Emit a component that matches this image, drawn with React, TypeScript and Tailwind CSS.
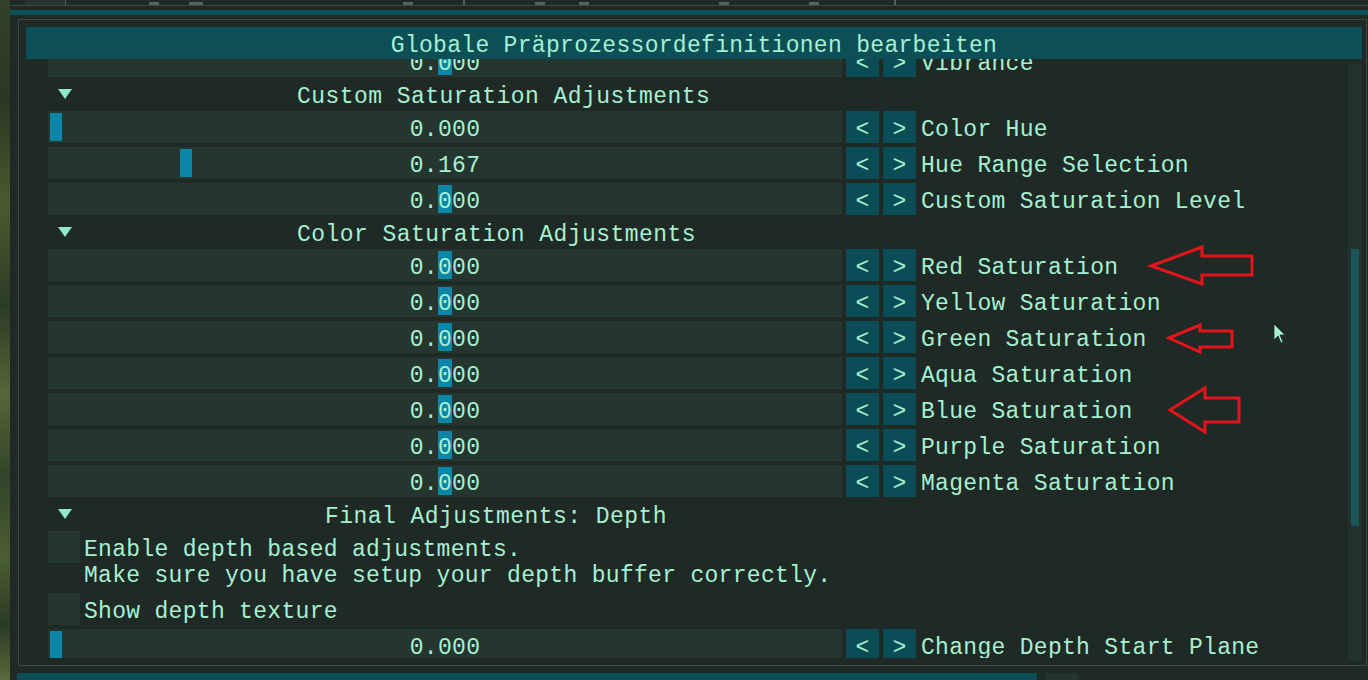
import React from 'react'

const FONT = "font-['Liberation_Mono',monospace] text-[23px] tracking-[0.3px]"

type SliderRow = {
  value: string
  label: string
  grab?: number
  caret?: boolean
}

const customRows: SliderRow[] = [
  { value: '0.000', label: 'Color Hue', grab: 2 },
  { value: '0.167', label: 'Hue Range Selection', grab: 132 },
  { value: '0.000', label: 'Custom Saturation Level', caret: true },
]

const colorRows: SliderRow[] = [
  { value: '0.000', label: 'Red Saturation', caret: true },
  { value: '0.000', label: 'Yellow Saturation', caret: true },
  { value: '0.000', label: 'Green Saturation', caret: true },
  { value: '0.000', label: 'Aqua Saturation', caret: true },
  { value: '0.000', label: 'Blue Saturation', caret: true },
  { value: '0.000', label: 'Purple Saturation', caret: true },
  { value: '0.000', label: 'Magenta Saturation', caret: true },
]

// Liberation Mono sits a little high in its line box, nudge glyphs down
function Value({ value, caret }: { value: string; caret?: boolean }) {
  if (!caret) return <span className="relative pt-[6px]">{value}</span>
  return (
    <span className="relative flex h-full items-center">
      <span className="pt-[6px]">{value.slice(0, 2)}</span>
      <span className="flex h-[28px] items-center bg-[#0b86a6] pt-[6px]">{value[2]}</span>
      <span className="pt-[6px]">{value.slice(3)}</span>
    </span>
  )
}

function Slider({ row }: { row: SliderRow }) {
  return (
    <div className="flex h-[32px] shrink-0 items-center">
      <div className="relative flex h-[32px] w-[794px] items-center justify-center bg-[#25352f]">
        {row.grab !== undefined && (
          <div className="absolute top-[2px] h-[28px] w-[12px] bg-[#0b86a6]" style={{ left: row.grab }} />
        )}
        <Value value={row.value} caret={row.caret} />
      </div>
      <button className="ml-[4px] flex h-[32px] w-[33px] items-center justify-center bg-[#0b4d57] pt-[6px]">&lt;</button>
      <button className="ml-[4px] flex h-[32px] w-[33px] items-center justify-center bg-[#0b4d57] pt-[6px]">&gt;</button>
      <span className="ml-[5px] whitespace-pre pt-[6px]">{row.label}</span>
    </div>
  )
}

function Header({ title, indent }: { title: string; indent: string }) {
  return (
    <div className="flex h-[26px] shrink-0 items-center">
      <svg width="14" height="10" viewBox="0 0 14 10" className="ml-[10px] shrink-0">
        <polygon points="0,0 14,0 7,10" fill="#8ee9c9" />
      </svg>
      <span className={`whitespace-pre pt-[6px] tracking-[0.45px] ${indent}`}>{title}</span>
    </div>
  )
}

function Checkbox({ children }: { children: React.ReactNode }) {
  return (
    <div className="flex shrink-0 items-start">
      <div className="h-[32px] w-[32px] shrink-0 bg-[#25352f]" />
      <div className="ml-[4px] whitespace-pre pt-[6px] leading-[26px]">{children}</div>
    </div>
  )
}

export default function App() {
  return (
    <div className={`relative h-[680px] w-[1368px] overflow-hidden bg-[#1f2925] text-[#a6f0d2] ${FONT}`}>
      <div className="flex h-full">
        {/* game texture peeking on the left */}
        <div className="h-full w-[10px] shrink-0 bg-[linear-gradient(180deg,#33412b_0%,#2a3823_15%,#4a5a30_30%,#2c3b25_45%,#56663a_58%,#33432a_70%,#4b5d33_82%,#2b3a24_92%,#5a6b3c_100%)]" />
        <div className="flex min-w-0 flex-1 flex-col">
          {/* strip of the window above */}
          <div className="flex h-[5px] shrink-0 items-end">
            <div className="ml-[15px] h-[5px] w-[40px] bg-[#27332f]" />
            <div className="h-[5px] w-[1px] bg-[#56625d]" />
            <div className="ml-[83px] h-[3px] w-[10px] bg-[#56625d]" />
            <div className="ml-[30px] h-[3px] w-[14px] bg-[#56625d]" />
            <div className="ml-[200px] h-[3px] w-[10px] bg-[#56625d]" />
            <div className="ml-[50px] h-[5px] w-[2px] bg-[#56625d]" />
            <div className="ml-[70px] h-[3px] w-[10px] bg-[#56625d]" />
            <div className="ml-[34px] h-[3px] w-[10px] bg-[#56625d]" />
            <div className="ml-[130px] h-[3px] w-[10px] bg-[#56625d]" />
            <div className="ml-[80px] h-[3px] w-[10px] bg-[#56625d]" />
            <div className="ml-[75px] h-[5px] w-[2px] bg-[#56625d]" />
          </div>
          <div className="h-[1px] shrink-0 bg-[#3a4743]" />
          <div className="h-[4px] shrink-0" />
          <div className="h-[5px] shrink-0 bg-[#0d5158]" />
          <div className="h-[4px] shrink-0" />

          {/* editor window */}
          <div className="ml-[8px] flex h-[647px] w-[1349px] shrink-0 flex-col border border-[#3b4944] pl-[7px] pr-[4px] pt-[7px]">
            <div className="flex h-[32px] shrink-0 items-center justify-center bg-[#0c4f57]">
              <span className="whitespace-pre pt-[6px]">Globale Präprozessordefinitionen bearbeiten</span>
            </div>
            <div className="flex min-h-0 flex-1">
              <div className="h-[599px] min-w-0 flex-1 overflow-hidden pl-[22px]">
                <div className="mt-[-14px] flex flex-col gap-[4px]">
                  <Slider row={{ value: '0.000', label: 'Vibrance', caret: true }} />
                  <Header title="Custom Saturation Adjustments" indent="ml-[225px]" />
                  {customRows.map((r) => (
                    <Slider key={r.label} row={r} />
                  ))}
                  <Header title="Color Saturation Adjustments" indent="ml-[225px]" />
                  {colorRows.map((r) => (
                    <Slider key={r.label} row={r} />
                  ))}
                  <Header title="Final Adjustments: Depth" indent="ml-[253px]" />
                  <Checkbox>
                    {'Enable depth based adjustments.\nMake sure you have setup your depth buffer correctly.'}
                  </Checkbox>
                  <Checkbox>Show depth texture</Checkbox>
                  <Slider row={{ value: '0.000', label: 'Change Depth Start Plane', grab: 2 }} />
                </div>
              </div>
              {/* scrollbar */}
              <div className="w-[14px] shrink-0 pt-[5px]">
                <div className="h-[597px] bg-[#24322d] px-[3px] pt-[185px]">
                  <div className="h-[277px] bg-[#1a5558]" />
                </div>
              </div>
            </div>
          </div>

          <div className="h-[7px] shrink-0" />
          <div className="flex h-[10px] shrink-0">
            <div className="ml-[7px] h-full w-[1020px] bg-[#0c4f57]" />
            <div className="ml-[8px] h-full w-[33px] bg-[#26342f]" />
          </div>
        </div>
      </div>

      {/* red annotation arrows and mouse pointer */}
      <svg className="pointer-events-none absolute inset-0" width="1368" height="680" viewBox="0 0 1368 680">
        <g fill="none" stroke="#e5141b" strokeWidth="3" strokeLinejoin="miter">
          <polygon points="1151,266 1202,247 1202,256 1252,256 1252,275 1202,275 1202,284" />
          <polygon points="1169,338 1200,325 1200,331 1232,331 1232,347 1200,347 1200,352" />
          <polygon points="1170,410 1205,388 1205,398 1239,398 1239,422 1205,422 1205,432" />
        </g>
        <polygon points="1274,324 1274,340 1278,336 1281,343 1283,342 1280,335 1285,335" fill="#a8f0d4" stroke="#1f2925" strokeWidth="0.8" />
      </svg>
    </div>
  )
}
